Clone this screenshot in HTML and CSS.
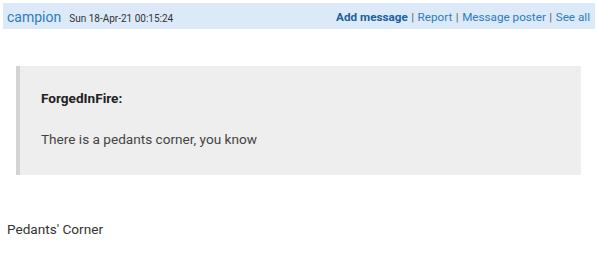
FILE: index.html
```html
<!DOCTYPE html>
<html>
<head>
<meta charset="utf-8">
<link rel="stylesheet" href="styles.css">
</head>
<body>
<div class="page">
  <div class="header">
    <div class="who">
      <a class="author" href="#">campion</a>
      <span class="date">Sun 18-Apr-21 00:15:24</span>
    </div>
    <div class="links">
      <a class="strong" href="#">Add message</a><span class="sep">|</span><a href="#">Report</a><span class="sep">|</span><a href="#">Message poster</a><span class="sep">|</span><a href="#">See all</a>
    </div>
  </div>
  <blockquote class="quote">
    <div class="qname">ForgedInFire:</div>
    <div class="qtext">There is a pedants corner, you know</div>
  </blockquote>
  <p class="body">Pedants' Corner</p>
</div>
</body>
</html>
```
FILE: styles.css
```css
html, body {
  margin: 0;
  padding: 0;
  background: #fff;
}
body {
  font-family: Roboto, "Liberation Sans", sans-serif;
  color: #333;
}
.page {
  padding: 3px 5px 0 3px;
}
.header {
  background: #dbe9f9;
  height: 26px;
  box-sizing: border-box;
  display: flex;
  align-items: center;
  justify-content: space-between;
  padding: 2px 5px 0 4px;
}
.who {
  display: flex;
  align-items: baseline;
  gap: 8px;
}
.author {
  color: #2e7cbf;
  font-size: 14px;
  text-decoration: none;
}
.date {
  font-size: 10px;
  color: #333;
}
.links {
  font-size: 11.7px;
  color: #666;
}
.links a {
  color: #2e7cbf;
  text-decoration: none;
}
.links a.strong {
  color: #1b5f9c;
  font-weight: bold;
}
.sep {
  margin: 0 3.5px;
}
.quote {
  margin: 37px 14px 0 13px;
  background: #eeeeee;
  border-left: 4px solid #d4d4d4;
  padding: 24px 21px 27px 21px;
  font-size: 13.6px;
}
.qname {
  font-weight: bold;
  color: #222;
  line-height: 16px;
}
.qtext {
  margin-top: 24px;
  color: #444;
  line-height: 18px;
}
.body {
  margin: 46px 0 0 4px;
  font-size: 13.6px;
  color: #333;
}
```
